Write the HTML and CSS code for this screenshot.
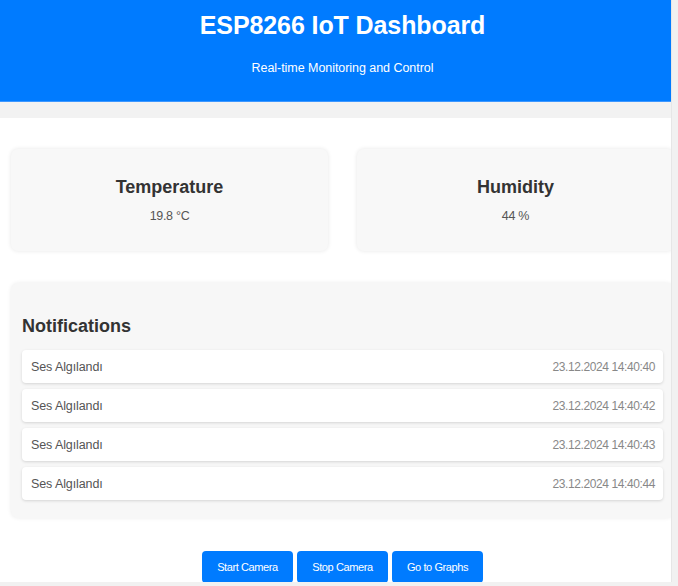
FILE: index.html
```html
<!DOCTYPE html>
<html lang="tr">
<head>
<meta charset="utf-8">
<title>ESP8266 IoT Dashboard</title>
<link rel="stylesheet" href="styles.css">
</head>
<body>
<div class="viewport">
  <div class="page">
    <header class="header">
      <h1 class="title">ESP8266 IoT Dashboard</h1>
      <p class="subtitle">Real-time Monitoring and Control</p>
    </header>
    <main class="container">
      <section class="cards">
        <div class="card">
          <h2 class="card-title">Temperature</h2>
          <p class="card-value">19.8 °C</p>
        </div>
        <div class="card">
          <h2 class="card-title">Humidity</h2>
          <p class="card-value">44 %</p>
        </div>
      </section>
      <section class="panel">
        <h2 class="panel-title">Notifications</h2>
        <ul class="list">
          <li class="row"><span class="msg">Ses Algılandı</span><span class="time">23.12.2024 14:40:40</span></li>
          <li class="row"><span class="msg">Ses Algılandı</span><span class="time">23.12.2024 14:40:42</span></li>
          <li class="row"><span class="msg">Ses Algılandı</span><span class="time">23.12.2024 14:40:43</span></li>
          <li class="row"><span class="msg">Ses Algılandı</span><span class="time">23.12.2024 14:40:44</span></li>
        </ul>
      </section>
      <div class="actions">
        <button class="btn">Start Camera</button>
        <button class="btn">Stop Camera</button>
        <button class="btn">Go to Graphs</button>
      </div>
    </main>
  </div>
</div>
</body>
</html>
```
FILE: styles.css
```css
html, body {
  margin: 0;
  padding: 0;
}
body {
  background: #f1f1f1;
  font-family: "Liberation Sans", Arial, sans-serif;
  height: 586px;
  overflow: hidden;
}
.viewport {
  width: 671px;
  height: 582px;
  overflow: hidden;
  background: #f2f2f2;
  border-right: 1px solid #e6e6e6;
}
.page {
  width: 685px;
}
.header {
  background: #007bff;
  color: #fff;
  height: 102px;
  text-align: center;
  box-sizing: border-box;
  padding-top: 10px;
  border-bottom: 1px solid #3d97ff;
}
.title {
  margin: 0;
  font-size: 25px;
  line-height: 30px;
  font-weight: bold;
  letter-spacing: -0.1px;
}
.subtitle {
  margin: 20px 0 0;
  font-size: 12.5px;
  line-height: 16px;
  letter-spacing: -0.05px;
}
.container {
  margin-top: 16px;
  background: #fff;
  padding: 31px 11px 0;
  height: 500px;
  box-sizing: border-box;
}
.cards {
  display: grid;
  grid-template-columns: 317px 317px;
  gap: 29px;
}
.card {
  background: #f8f8f8;
  border-radius: 7px;
  box-shadow: 0 0 4px rgba(0, 0, 0, 0.1);
  height: 102px;
  display: flex;
  flex-direction: column;
  align-items: center;
  justify-content: center;
}
.card-title {
  margin: 0 0 10px;
  font-size: 18px;
  line-height: 22px;
  font-weight: bold;
  color: #333;
}
.card-value {
  margin: 0;
  font-size: 12.5px;
  line-height: 16px;
  color: #555;
  letter-spacing: -0.3px;
}
.panel {
  margin-top: 32px;
  background: #f7f7f7;
  border-radius: 7px;
  box-shadow: 0 0 4px rgba(0, 0, 0, 0.08);
  padding: 11px 11px 18px;
}
.panel-title {
  margin: 21px 0 13px;
  font-size: 18px;
  line-height: 22px;
  font-weight: bold;
  color: #333;
}
.list {
  list-style: none;
  margin: 0;
  padding: 0;
  display: flex;
  flex-direction: column;
  gap: 6px;
}
.row {
  background: #fff;
  border-radius: 4px;
  box-shadow: 0 1px 3px rgba(0, 0, 0, 0.14);
  height: 33px;
  padding: 0 8px 0 9px;
  display: flex;
  align-items: center;
  justify-content: space-between;
  font-size: 12.5px;
}
.msg {
  color: #555;
  letter-spacing: -0.1px;
}
.time {
  color: #888;
  font-size: 12px;
  letter-spacing: -0.4px;
}
.actions {
  margin-top: 33px;
  display: flex;
  justify-content: center;
  gap: 4px;
}
.btn {
  background: #007bff;
  color: #fff;
  border: none;
  border-radius: 4px;
  width: 91px;
  height: 32px;
  font-family: "Liberation Sans", Arial, sans-serif;
  font-size: 11px;
  letter-spacing: -0.4px;
  padding: 0;
}
```
